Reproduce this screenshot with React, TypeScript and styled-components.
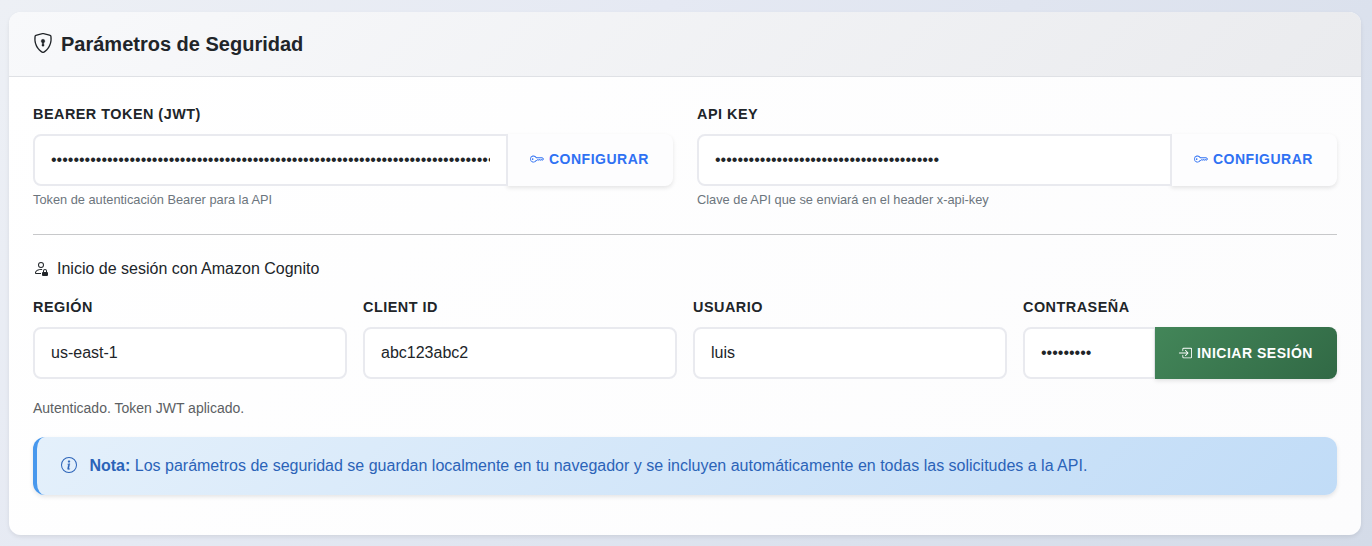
import React from "react";
import styled, { createGlobalStyle } from "styled-components";
import { BsBoxArrowInRight, BsInfoCircle, BsKey, BsPersonLock, BsShieldLock } from "react-icons/bs";

const GlobalStyle = createGlobalStyle`
  *, *::before, *::after { box-sizing: border-box; }
  body {
    margin: 0;
    min-height: 546px;
    background: linear-gradient(135deg, #edf0f5 0%, #e5e9f3 35%, #dbe1ed 72%, #d4dbe8 100%);
    color: #212529;
    font-family: "Liberation Sans", Arial, sans-serif;
    font-size: 16px;
    line-height: 24px;
  }
`;

const Card = styled.section`
  width: 1352px;
  height: 523px;
  margin: 12px 0 0 9px;
  border-radius: 12px;
  overflow: hidden;
  background: linear-gradient(135deg, #ffffff 0%, #fcfcfd 100%);
  box-shadow: 0 2px 4px rgba(0, 0, 0, 0.08);
`;

const CardHeader = styled.header`
  display: flex;
  align-items: center;
  height: 65px;
  padding: 0 24px;
  border-bottom: 1px solid #dfe1e5;
  background: linear-gradient(135deg, #f8f9fb 0%, #eaebee 100%);
`;

const Title = styled.h5`
  display: flex;
  align-items: center;
  gap: 8px;
  margin: 0;
  font-size: 20px;
  font-weight: 700;
  line-height: 24px;

  svg { margin-top: -2px; stroke: none; }
  svg path:last-child { stroke: currentColor; stroke-width: 0.25; }
`;

const CardBody = styled.div`
  padding: 26px 24px 24px;
`;

const Grid = styled.div<{ $columns: number; $gap: number }>`
  display: grid;
  grid-template-columns: repeat(${(p) => p.$columns}, minmax(0, 1fr));
  column-gap: ${(p) => p.$gap}px;
`;

const Label = styled.label`
  display: block;
  margin-bottom: 9px;
  font-size: 14.4px;
  font-weight: 700;
  line-height: 22px;
  letter-spacing: 0.5px;
  text-transform: uppercase;
`;

const InputGroup = styled.div`
  display: flex;
  height: 52px;
`;

const Input = styled.input<{ $joined?: boolean }>`
  flex: 1;
  min-width: 0;
  width: 100%;
  height: 52px;
  padding: 12px 16px;
  border: 2px solid #e9eaef;
  border-radius: ${(p) => (p.$joined ? "8px 0 0 8px" : "8px")};
  background: #fff;
  color: #212529;
  font: 16px/24px "Liberation Sans", Arial, sans-serif;
  outline: none;
  position: relative;
  z-index: 1;
`;

const Button = styled.button<{ $solid?: boolean }>`
  display: flex;
  align-items: center;
  justify-content: center;
  gap: 4.4px;
  flex: none;
  width: ${(p) => (p.$solid ? 182 : 166)}px;
  margin-left: -1px;
  padding: ${(p) => (p.$solid ? "0 0.5px 0 0" : "0 0.5px 2px 0")};
  border: 0;
  border-radius: 0 8px 8px 0;
  background: ${(p) => (p.$solid ? "linear-gradient(135deg, #438659, #316945)" : "#fdfdfe")};
  color: ${(p) => (p.$solid ? "#fff" : "#2f71f3")};
  font: 700 14px/21px "Liberation Sans", Arial, sans-serif;
  letter-spacing: 0.5px;
  text-transform: uppercase;
  box-shadow: 0 2px 4px rgba(0, 0, 0, 0.1);
  position: relative;
  z-index: ${(p) => (p.$solid ? 2 : 0)};

  svg { margin: 0 0.3px 0 -0.3px; }
`;

const Help = styled.div`
  margin-top: 4px;
  color: #6c757d;
  font-size: 12.8px;
  line-height: 19px;
`;

const Divider = styled.hr`
  height: 1px;
  margin: 25px 0 24px;
  border: 0;
  background: #c7c8ca;
`;

const Subtitle = styled.h6`
  display: flex;
  align-items: center;
  gap: 8px;
  margin: 0 0 18px;
  font-size: 16px;
  font-weight: 400;
  line-height: 19px;

  svg { margin-top: -1px; }
`;

const Status = styled.p`
  margin: 19px 0 18px;
  color: #5c5f63;
  font-size: 14px;
  line-height: 21px;
`;

const Note = styled.aside`
  display: flex;
  align-items: center;
  gap: 12.45px;
  height: 58px;
  padding: 0 24px;
  border-left: 4px solid #4898ed;
  border-radius: 12px;
  background: linear-gradient(135deg, #e4f0fb 0%, #c1dcf7 100%);
  color: #2b63b8;
  box-shadow: 0 2px 4px rgba(0, 0, 0, 0.1);

  svg { margin-top: -2px; stroke: none; }
  svg path:last-child { stroke: currentColor; stroke-width: 0.25; }
`;

export default function App() {
  return (
    <>
      <GlobalStyle />
      <Card>
        <CardHeader>
          <Title><BsShieldLock size={20} />Parámetros de Seguridad</Title>
        </CardHeader>
        <CardBody>
          <Grid $columns={2} $gap={24}>
            <div>
              <Label htmlFor="token">Bearer Token (JWT)</Label>
              <InputGroup>
                <Input $joined id="token" type="password" defaultValue={"x".repeat(120)} />
                <Button><BsKey size={14} />Configurar</Button>
              </InputGroup>
              <Help>Token de autenticación Bearer para la API</Help>
            </div>
            <div>
              <Label htmlFor="key">API Key</Label>
              <InputGroup>
                <Input $joined id="key" type="password" defaultValue={"x".repeat(40)} />
                <Button><BsKey size={14} />Configurar</Button>
              </InputGroup>
              <Help>Clave de API que se enviará en el header x-api-key</Help>
            </div>
          </Grid>
          <Divider />
          <Subtitle><BsPersonLock size={16} />Inicio de sesión con Amazon Cognito</Subtitle>
          <Grid $columns={4} $gap={16}>
            <div>
              <Label htmlFor="region">Región</Label>
              <InputGroup><Input id="region" defaultValue="us-east-1" /></InputGroup>
            </div>
            <div>
              <Label htmlFor="client">Client ID</Label>
              <InputGroup><Input id="client" defaultValue="abc123abc2" /></InputGroup>
            </div>
            <div>
              <Label htmlFor="user">Usuario</Label>
              <InputGroup><Input id="user" defaultValue="luis" /></InputGroup>
            </div>
            <div>
              <Label htmlFor="password">Contraseña</Label>
              <InputGroup>
                <Input $joined id="password" type="password" defaultValue="password1" />
                <Button $solid><BsBoxArrowInRight size={14} />Iniciar sesión</Button>
              </InputGroup>
            </div>
          </Grid>
          <Status>Autenticado. Token JWT aplicado.</Status>
          <Note>
            <BsInfoCircle size={16} />
            <span><strong>Nota:</strong> Los parámetros de seguridad se guardan localmente en tu navegador y se incluyen automáticamente en todas las solicitudes a la API.</span>
          </Note>
        </CardBody>
      </Card>
    </>
  );
}
